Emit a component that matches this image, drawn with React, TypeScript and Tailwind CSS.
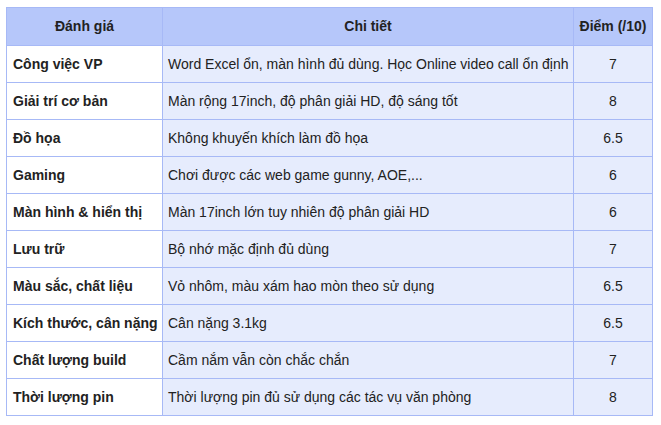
const rows: [string, string, string][] = [
  ['Công việc VP', 'Word Excel ổn, màn hình đủ dùng. Học Online video call ổn định', '7'],
  ['Giải trí cơ bản', 'Màn rộng 17inch, độ phân giải HD, độ sáng tốt', '8'],
  ['Đồ họa', 'Không khuyến khích làm đồ họa', '6.5'],
  ['Gaming', 'Chơi được các web game gunny, AOE,...', '6'],
  ['Màn hình & hiển thị', 'Màn 17inch lớn tuy nhiên độ phân giải HD', '6'],
  ['Lưu trữ', 'Bộ nhớ mặc định đủ dùng', '7'],
  ['Màu sắc, chất liệu', 'Vỏ nhôm, màu xám hao mòn theo sử dụng', '6.5'],
  ['Kích thước, cân nặng', 'Cân nặng 3.1kg', '6.5'],
  ['Chất lượng build', 'Cầm nắm vẫn còn chắc chắn', '7'],
  ['Thời lượng pin', 'Thời lượng pin đủ sử dụng các tác vụ văn phòng', '8'],
];

export default function App() {
  return (
    <div className="w-[661px] h-[425px] bg-white pt-[7px] pl-[6px] font-['Liberation_Sans',Arial,sans-serif] text-[14px] text-[#222]">
      <table className="border-collapse table-fixed w-[646px]">
        <colgroup>
          <col className="w-[156px]" />
          <col className="w-[411px]" />
          <col className="w-[79px]" />
        </colgroup>
        <thead>
          <tr className="bg-[#b6c7fa]">
            <th className="h-[38px] border border-[#a7b9f6] font-bold text-center">Đánh giá</th>
            <th className="h-[38px] border border-[#a7b9f6] font-bold text-center">Chi tiết</th>
            <th className="h-[38px] border border-[#a7b9f6] font-bold text-center">Điểm (/10)</th>
          </tr>
        </thead>
        <tbody>
          {rows.map(([name, detail, score]) => (
            <tr key={name}>
              <td className="h-[37px] border border-[#a7b9f6] bg-white px-[6px] font-bold whitespace-nowrap">{name}</td>
              <td className="h-[37px] border border-[#a7b9f6] bg-[#e6ecfd] px-[5px] whitespace-nowrap">{detail}</td>
              <td className="h-[37px] border border-[#a7b9f6] bg-[#e6ecfd] text-center">{score}</td>
            </tr>
          ))}
        </tbody>
      </table>
    </div>
  );
}
